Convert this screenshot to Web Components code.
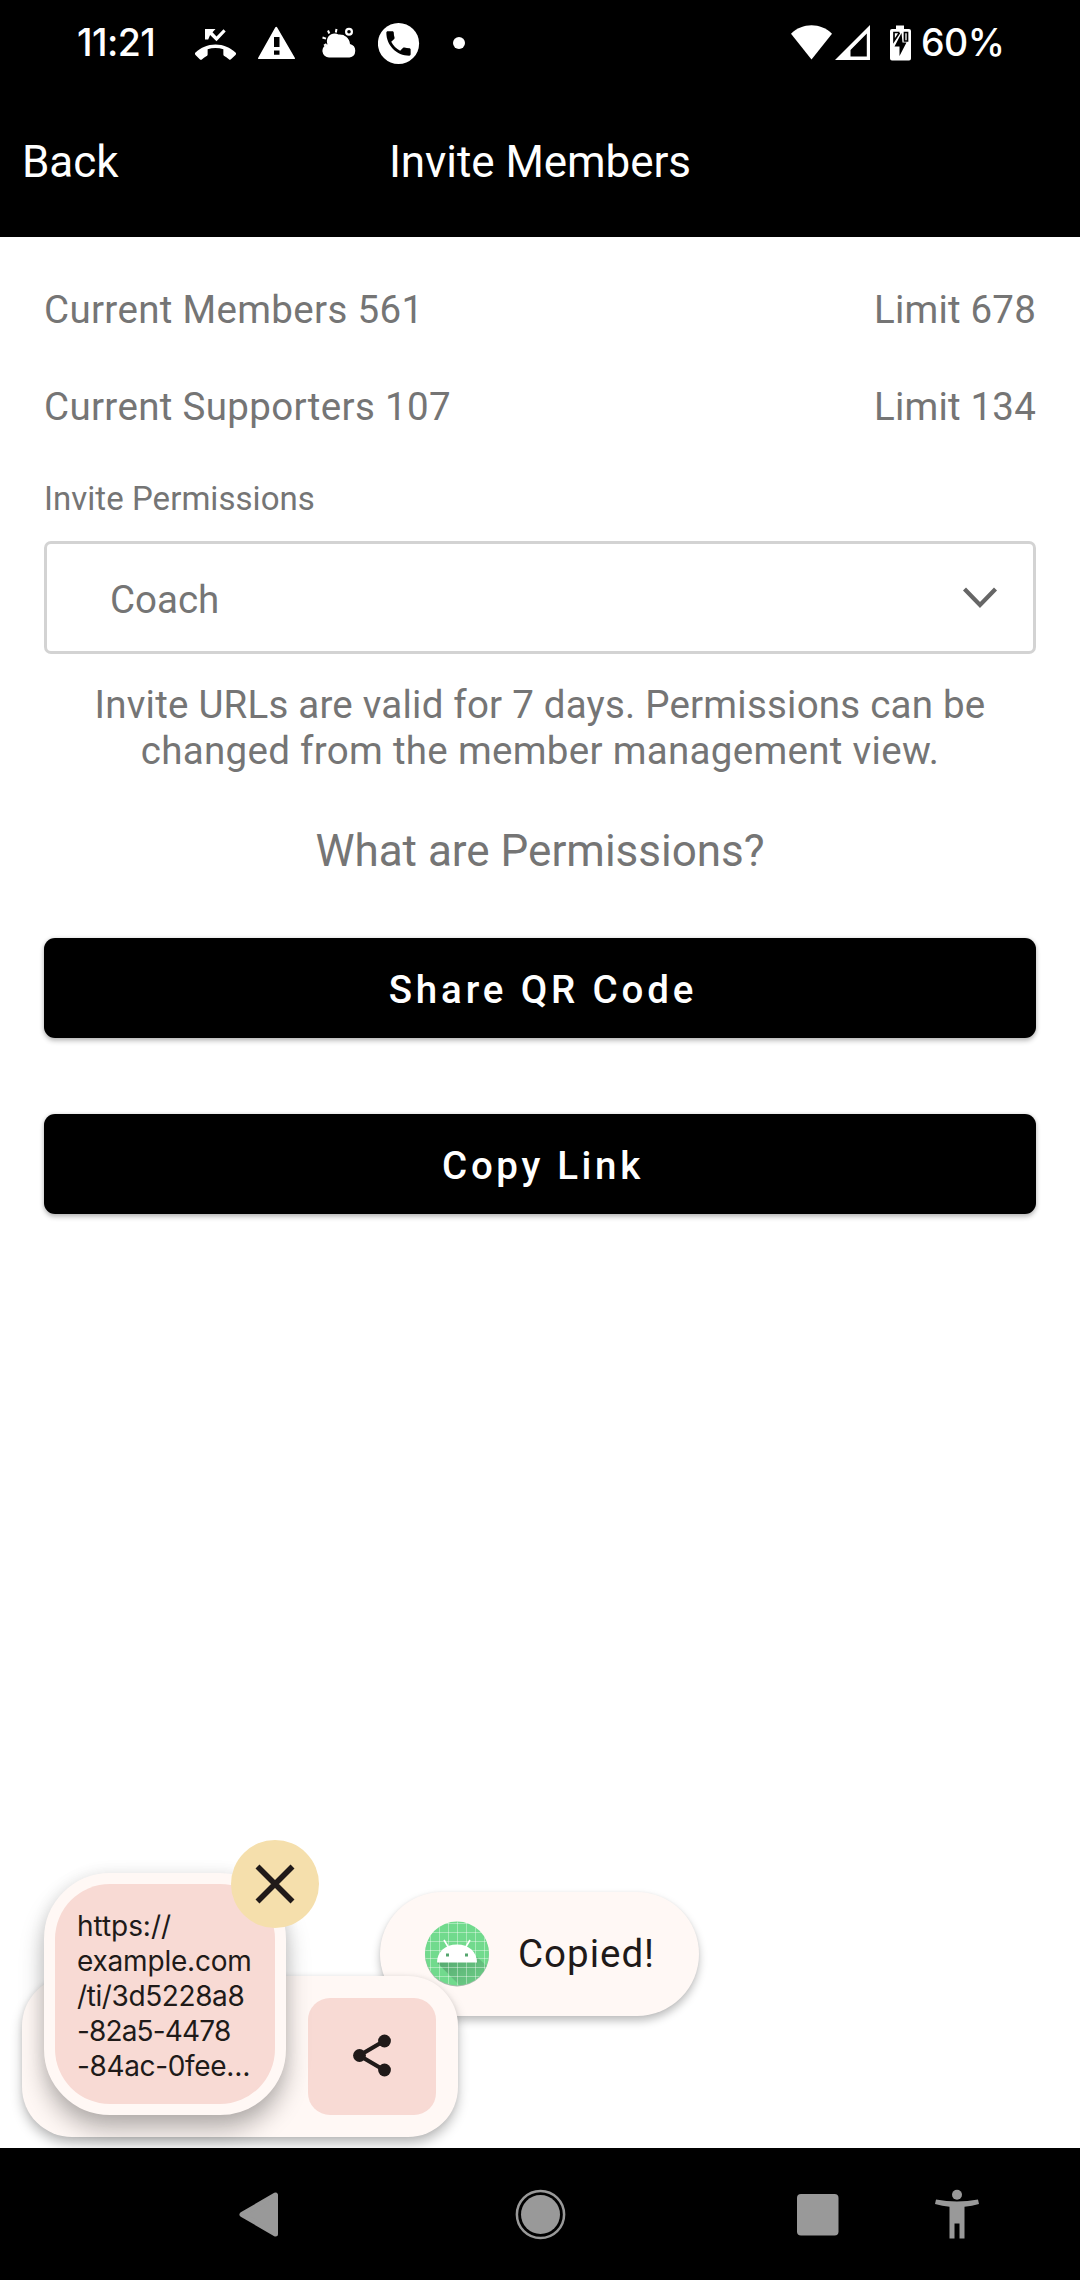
<!DOCTYPE html>
<html lang="en">
<head>
<meta charset="utf-8">
<title>Invite Members</title>
<style>
html,body{margin:0;padding:0}
body{width:1080px;height:2280px;overflow:hidden;background:#fff;font-family:Roboto,sans-serif}
</style>
</head>
<body>
<invite-app></invite-app>
<script>
const define = (name, html) => {
  const template = document.createElement('template');
  template.innerHTML = html;
  customElements.define(name, class extends HTMLElement {
    constructor() {
      super();
      this.attachShadow({ mode: 'open' }).appendChild(template.content.cloneNode(true));
    }
  });
};

define('status-bar', `
<style>
:host{display:flex;height:88px;background:#000;color:#fff;box-sizing:border-box;padding:20px 79px 0 77px;justify-content:space-between;font-family:Inter,sans-serif}
div{display:flex;height:48px}
svg{display:block;height:48px;fill:#fff}
span{line-height:46px;white-space:nowrap}
.time{font-size:37.5px;font-weight:500;letter-spacing:-.6px;width:118px}
.pct{font-size:37.5px;font-weight:500;letter-spacing:-.5px;margin-left:10px;width:80px}
</style>
<div>
<span class="time">11:21</span>
<svg width="42" viewBox="195 20 42 48"><path transform="translate(195 24) scale(1.708)" d="M23.71 16.67C20.66 13.78 16.54 12 12 12S3.34 13.78.29 16.67a1 1 0 0 0 0 1.42l2.48 2.48a1 1 0 0 0 1.41.01c.79-.74 1.69-1.36 2.66-1.85.33-.16.56-.5.56-.9v-3.1c1.45-.48 3-.73 4.6-.73s3.15.25 4.6.72v3.1c0 .39.23.74.56.9.98.49 1.87 1.12 2.66 1.85a1 1 0 0 0 1.41-.01l2.48-2.48a1 1 0 0 0 0-1.41z"/><path d="M205 29h10.500l-3 3.200 4 4.200 7-7.200 2.200 2.200-9.200 9.800-6.400-6.200-1.900 4.500H205z"/></svg>
<svg width="38" style="margin-left:21px" viewBox="258 20 38 48"><path fill-rule="evenodd" d="M275.200 27.500q1-1.500 2 0l17.600 30.300q.5 1.200-.6 1.200h-35.400q-1.100 0-.6-1.200zM274 37v10h5.500V37zm0 13.500v4.300h5.500v-4.300z"/></svg>
<svg width="36" style="margin-left:26px" viewBox="322 20 36 48"><path d="M329 57.500a6.700 6.700 0 0 1-1.500-13.200A7.500 7.500 0 0 1 327 40a7.600 7.600 0 0 1 11.500-5.500 10.500 10.500 0 0 1 11.500 9.500 6.900 6.900 0 0 1-.5 13.500z"/><path stroke="#fff" stroke-width="2" d="m328 30.500 1.300 3M336.500 29l-.7 3.500M343.500 35.500l-2.500 1.800M322.500 37.500l3.500 1.100M324 45.500l2.500-1.500"/><circle cx="349" cy="31.700" r="2.900" fill="none" stroke="#fff" stroke-width="2.200"/></svg>
<svg width="42" style="margin-left:20px" viewBox="378 20 42 48"><circle cx="398.500" cy="43.500" r="20.600"/><path fill="#000" transform="translate(382.300 27.300) scale(1.350)" d="M6.620 10.790c1.440 2.830 3.760 5.140 6.590 6.590l2.200-2.200c.27-.27.67-.36 1.020-.24 1.120.37 2.330.57 3.570.57.55 0 1 .45 1 1V20c0 .55-.45 1-1 1-9.390 0-17-7.610-17-17 0-.55.45-1 1-1h3.500c.55 0 1 .45 1 1 0 1.250.2 2.450.57 3.570.11.35.03.74-.25 1.020z"/></svg>
<svg width="14" style="margin-left:32px" viewBox="452 20 14 48"><circle cx="459" cy="43" r="6"/></svg>
</div>
<div>
<svg width="42" viewBox="791 20 42 48"><path d="M791 33.800c11-11.500 30-11.500 41 0L811.500 59.500z"/></svg>
<svg width="36" style="margin-left:2px" viewBox="835 20 36 48"><path fill-rule="evenodd" d="M870 25v35h-35zM850.500 50v6.500h16.300V33.500z"/></svg>
<svg width="22" style="margin-left:18px" viewBox="889 20 22 48"><path d="M896 25.500h8V29h5q2 0 2 2v27.500q0 2-2 2h-17q-2 0-2-2V31q0-2 2-2h4z"/><path fill="none" stroke="#000" stroke-width="1.700" d="M899.500 32.500H894V41l5.500-8.300M904.500 32.500V41h3v-8.500z"/><path fill="#000" d="m901.500 33-7 13.500h5V56l7-13.500h-4z"/></svg>
<span class="pct">60%</span>
</div>`);

define('app-bar', `
<style>
:host{display:grid;grid-template-columns:1fr auto 1fr;align-items:center;height:149px;background:#000;color:#fff;font-size:44px;line-height:52px;letter-spacing:-.060px;padding:0 22px 2px;box-sizing:border-box}
</style>
<slot name="back"></slot><slot></slot>`);

define('limit-row', `
<style>
:host{display:flex;justify-content:space-between;height:97px;line-height:97px;font-size:38.500px;letter-spacing:.340px}
::slotted([slot=limit]){letter-spacing:.180px}
</style>
<slot></slot><slot name="limit"></slot>`);

define('select-field', `
<style>
:host{display:block}
label{display:block;height:86px;line-height:87px;font-size:33px;letter-spacing:.040px}
.box{display:flex;align-items:center;justify-content:space-between;height:113px;box-sizing:border-box;border:3px solid #d3d3d3;border-radius:7px;padding:0 35.500px 0 63px;font-size:38.500px}
.value{padding-top:5px;line-height:46px}
</style>
<label><slot name="label"></slot></label>
<div class="box"><span class="value"><slot></slot></span>
<svg width="36" height="24" viewBox="0 0 36 24"><path d="m2.500 3 15.500 16L33.500 3" fill="none" stroke="#666" stroke-width="4.200"/></svg></div>`);

define('action-button', `
<style>
:host{display:block;height:100px;box-sizing:border-box;padding:2px 0 0 6px;border-radius:11px;background:#000;color:#fff;text-align:center;font-size:38.500px;line-height:99px;font-weight:500;letter-spacing:3.850px;box-shadow:0 3px 5px rgba(0,0,0,.24),0 0 4px rgba(0,0,0,.12)}
</style><slot></slot>`);

define('toast-message', `
<style>
:host{display:flex;align-items:center;box-sizing:border-box;width:319px;height:124px;border-radius:62px;background:#fff8f5;color:#201a19;padding-left:44px;font-size:38.500px;line-height:46px;letter-spacing:1px;box-shadow:0 5px 8px rgba(0,0,0,.25),0 0 3px rgba(0,0,0,.05)}
svg{margin-right:28px;flex:none}
</style>
<svg width="66" height="66" viewBox="0 0 66 66">
<defs><clipPath id="disc"><circle cx="33" cy="32.500" r="32"/></clipPath><linearGradient id="shade" x1="0" y1="0" x2="1" y2="1"><stop offset="0" stop-color="#55a56e"/><stop offset="1" stop-color="#70d58b"/></linearGradient></defs>
<circle cx="33" cy="33.500" r="32" fill="#aab9ad"/>
<g clip-path="url(#disc)"><path fill="#71da8d" d="M0 0h66v66H0z"/>
<path fill="url(#shade)" d="M13 41.500 37 66h29V48L53 36z"/>
<path d="M6.500 0v66M15.500 0v66M24.500 0v66M33.500 0v66M42.500 0v66M51.500 0v66M60.500 0v66M0 2.500h66M0 11.500h66M0 20.500h66M0 29.500h66M0 37.500h66M0 46.500h66M0 55.500h66" stroke="#fff" stroke-opacity=".38" stroke-width="1"/></g>
<path fill="#fff" d="M13 41.500C13 31 21 23.500 33 23.500s20 7.500 20 18z"/><path stroke="#fff" stroke-width="1.600" d="m20 19 4.500 7.500M46 19l-4.500 7.500"/>
<path fill="#55a56e" d="M22 32.500h3v3h-3zM41 32.500h3v3h-3z"/>
</svg><slot></slot>`);

define('clipboard-overlay', `
<style>
:host{display:block;width:460px;height:308px;position:relative;color:#201a19}
.bar{position:absolute;left:22px;top:136px;width:436px;height:161px;box-sizing:border-box;border-radius:50px;background:#fff8f5;display:flex;align-items:center;justify-content:flex-end;padding-right:22px;box-shadow:0 7px 12px rgba(0,0,0,.25),0 0 5px rgba(0,0,0,.07)}
.share{display:grid;place-items:center;width:128px;height:117px;border-radius:22px;background:#f8dad4}
.share svg{margin-top:-1px}
.card{position:absolute;left:44px;top:33px;width:242px;height:242px;box-sizing:border-box;border:11px solid #fff8f5;border-radius:66px;background:#fff8f5;padding:25px 0 0 22px;box-shadow:0 15px 24px rgba(0,0,0,.28),0 0 16px rgba(0,0,0,.08);font:400 28px/35px Inter,sans-serif}
.fill{position:absolute;inset:0;border-radius:55px;background:#f8dad4}
.lines{position:relative;display:grid;white-space:nowrap}
.close{position:absolute;left:231px;top:0;width:88px;height:88px;border-radius:50%;background:#f5dfac}
svg{display:block}
</style>
<div class="bar"><div class="share"><svg width="40" height="46" viewBox="352 2033.500 40 46" fill="#201a19"><path d="M384 2041.500 359.300 2056 384 2070.500" fill="none" stroke="#201a19" stroke-width="4.200"/><circle cx="359.500" cy="2056" r="6.400"/><circle cx="384.500" cy="2041.500" r="6.400"/><circle cx="384.500" cy="2070.500" r="6.400"/></svg></div></div>
<div class="card"><div class="fill"></div><div class="lines"><slot></slot></div></div>
<div class="close"><svg width="88" height="88"><path d="m26.500 26.500 35 35m0-35-35 35" stroke="#201a19" stroke-width="5.600"/></svg></div>`);

define('nav-bar', `
<style>
:host{display:flex;height:132px;background:#000}
svg{display:block;fill:#999}
</style>
<svg width="1080" height="132" viewBox="0 2148 1080 132">
<path stroke="#999" stroke-width="5" stroke-linejoin="round" d="M242 2214.500 275.500 2195v39z"/>
<circle cx="540.500" cy="2214.500" r="19.500"/><circle cx="540.500" cy="2214.500" r="23.600" fill="none" stroke="#999" stroke-width="2.500"/>
<rect x="797" y="2194" width="41.500" height="41.500" rx="4"/>
<circle cx="957" cy="2194.700" r="5"/>
<path d="M936 2199.500q21 4 42 0l1 4.500q-7 2-14.500 2.800v31.700h-5V2223.500h-5v15h-5v-31.700q-7-.8-14.500-2.800z"/>
</svg>`);

define('invite-app', `
<style>
:host{display:flex;flex-direction:column;position:relative;width:1080px;height:2280px;background:#fff;color:#757575}
main{flex:1;display:flex;flex-direction:column;padding:24px 44px 0}
p{margin:28px 0 0;text-align:center;font-size:38.500px;line-height:45.700px;letter-spacing:.310px}
.first{letter-spacing:.215px}
.what{margin-top:48px;text-align:center;font-size:44px;line-height:60px}
action-button{margin-top:57px}
action-button + action-button{margin-top:76px;letter-spacing:3.650px}
toast-message{position:absolute;left:380px;top:1892px}
clipboard-overlay{position:absolute;left:0;top:1840px}
.url1{letter-spacing:-.050px}
.url2{letter-spacing:-.200px}
.url3{letter-spacing:-.400px}
.url4{letter-spacing:-.850px}
.url5{letter-spacing:-.350px}
</style>
<status-bar></status-bar>
<app-bar><span slot="back">Back</span><span>Invite Members</span></app-bar>
<main>
<limit-row><span>Current Members 561</span><span slot="limit">Limit 678</span></limit-row>
<limit-row><span>Current Supporters 107</span><span slot="limit">Limit 134</span></limit-row>
<select-field><span slot="label">Invite Permissions</span>Coach</select-field>
<p><span class="first">Invite URLs are valid for 7 days. Permissions can be</span><br>changed from the member management view.</p>
<div class="what">What are Permissions?</div>
<action-button>Share QR Code</action-button>
<action-button>Copy Link</action-button>
</main>
<toast-message>Copied!</toast-message>
<clipboard-overlay><span class="url1">https://</span><span class="url2">example.com</span><span class="url3">/ti/3d5228a8</span><span class="url4">-82a5-4478</span><span class="url5">-84ac-0fee…</span></clipboard-overlay>
<nav-bar></nav-bar>`);
</script>
</body>
</html>
